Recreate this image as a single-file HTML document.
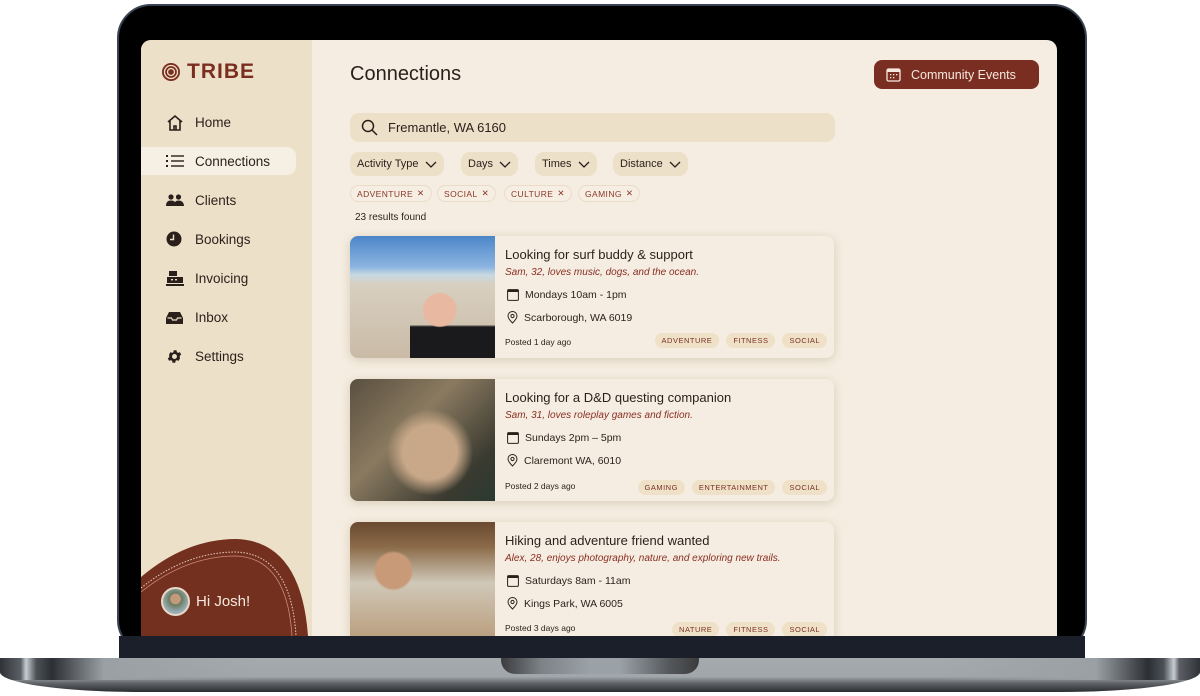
<!DOCTYPE html>
<html style="overflow:hidden"><head><meta charset="utf-8"><style>
*{box-sizing:border-box;margin:0;padding:0}
html,body{width:1200px;height:696px;overflow:hidden}
body{background:#fff;position:relative;font-family:"Liberation Sans",sans-serif;color:#2a1f1a}
.frame{position:absolute;left:117px;top:4px;width:970px;height:650px;background:#000;border-radius:34px;border:2px solid #3a4254}
.screen{position:absolute;left:141px;top:40px;width:916px;height:596px;background:#f5ede1;border-radius:10px 10px 0 0;overflow:hidden}
.bezel{position:absolute;left:119px;top:636px;width:966px;height:23px;background:#1b1f2a}
.base{position:absolute;left:0;top:658px;width:1200px;height:34px;border-radius:0 0 140px 140px/0 0 20px 20px;background:linear-gradient(180deg,#a4aaae 0,#a0a6aa 55%,#5e6266 75%,#2a2c30 100%);overflow:hidden}
.base:before{content:"";position:absolute;left:0;top:0;width:260px;height:22px;background:linear-gradient(90deg,#2f3236 0,#5c6065 8%,#c6cdd3 10%,#4c5055 14%,#2c2f33 20%,#9aa0a4 40%,transparent 100%)}
.base:after{content:"";position:absolute;right:0;top:0;width:260px;height:22px;background:linear-gradient(270deg,#2f3236 0,#5c6065 8%,#c6cdd3 10%,#4c5055 14%,#2c2f33 20%,#9aa0a4 40%,transparent 100%)}
.notch{position:absolute;left:501px;top:658px;width:198px;height:16px;border-radius:0 0 14px 14px;background:linear-gradient(90deg,#3a3b3d,#7c8186 20%,#9aa2a8 45%,#9aa2a8 60%,#55585b 85%,#3a3b3d);z-index:2}
.side{position:absolute;left:0;top:0;width:171px;height:596px;background:#ede0c9;overflow:hidden}
.logo{position:absolute;left:20px;top:20px;display:flex;align-items:center;gap:6px;color:#7a2e1f;font-weight:bold;font-size:21px;letter-spacing:1px}
.nav{position:absolute;left:0;width:155px;height:28px;display:flex;align-items:center;font-size:13.5px;color:#2a1f1a}
.nav svg{position:absolute;left:25px}
.nav span{position:absolute;left:54px}
.nav.act{background:#f6efe3;border-radius:0 9px 9px 0}
.hi{position:absolute;left:20px;top:547px;display:flex;align-items:center;gap:6px;color:#f5e9df;font-size:15px}
.av{width:29px;height:29px;border-radius:50%;border:2px solid #e8d8c8;background:radial-gradient(circle at 50% 40%,#c49a7c 0 25%,#6a7a5e 30%,#9ab0b8 70%)}
h1{position:absolute;left:209px;top:23px;font-size:20px;font-weight:normal;color:#2a1f1a}
.ce{position:absolute;left:733px;top:20px;width:165px;height:29px;background:#7a2e22;border-radius:8px;color:#f5e9df;font-size:12.5px;display:flex;align-items:center;padding-left:12px;gap:10px}
.search{position:absolute;left:209px;top:73px;width:485px;height:29px;background:#ede0c9;border-radius:9px;display:flex;align-items:center;padding-left:11px;gap:10px;font-size:13px}
.dd{position:absolute;top:112px;height:24px;background:#ede0c9;border-radius:9px;font-size:11px;display:flex;align-items:center;padding:0 7px;gap:6px}
.tag{position:absolute;top:145px;height:17px;border:1px solid #eadcc8;border-radius:9px;font-size:8.5px;color:#8a3828;letter-spacing:.4px;display:flex;align-items:center;padding:0 6px;gap:4px;background:#f6eee3}
.res{position:absolute;left:214px;top:172px;font-size:10px}
.card{position:absolute;left:209px;width:484px;height:122px;background:#f5ede1;border-radius:8px;box-shadow:0 2px 10px rgba(120,90,50,.22);overflow:hidden}
.img{position:absolute;left:0;top:0;width:145px;height:100%}
.ct{position:absolute;left:155px;top:11px;font-size:13px}
.cs{position:absolute;left:155px;top:31px;font-size:10px;font-style:italic;color:#8a2e22}
.r{position:absolute;left:157px;font-size:10.5px;display:flex;align-items:center;gap:6px}
.po{position:absolute;left:155px;top:101px;font-size:8.5px}
.pills{position:absolute;right:7px;top:97px;display:flex;gap:7px}
.pill{height:15px;background:#efe0c8;border-radius:8px;font-size:7.5px;letter-spacing:.5px;color:#7a3225;display:flex;align-items:center;padding:0 7px}
</style></head><body>
<div class="frame"></div>
<div class="bezel"></div>
<div class="base"></div>
<div class="notch"></div>
<div class="screen">
 <div class="side">
  <div class="logo"><svg width="20" height="20" viewBox="0 0 20 20"><circle cx="10" cy="10" r="9" fill="#7a2e1f"/><circle cx="10" cy="10" r="6.5" fill="none" stroke="#ede0c9" stroke-width="1.3"/><circle cx="10" cy="10" r="3.5" fill="none" stroke="#ede0c9" stroke-width="1.3"/></svg>TRIBE</div>
  <div class="nav" style="top:68px"><svg width="18" height="17" viewBox="0 0 18 17"><path d="M2 8L9 2l7 6M4 7v9h10V7M8 16v-4h2v4" fill="none" stroke="#2a1f1a" stroke-width="1.6"/></svg><span>Home</span></div>
  <div class="nav act" style="top:107px"><svg width="18" height="14" viewBox="0 0 18 14"><g fill="#2a1f1a"><rect x="0" y="1" width="2" height="2"/><rect x="0" y="6" width="2" height="2"/><rect x="0" y="11" width="2" height="2"/><rect x="5" y="1.3" width="13" height="1.4"/><rect x="5" y="6.3" width="13" height="1.4"/><rect x="5" y="11.3" width="13" height="1.4"/></g></svg><span>Connections</span></div>
  <div class="nav" style="top:146px"><svg width="18" height="14" viewBox="0 0 18 14"><g fill="#2a1f1a"><circle cx="5" cy="4" r="2.6"/><circle cx="12.5" cy="4" r="2.6"/><path d="M0 13c0-4 2-5.5 5-5.5s5 1.5 5 5.5zM8 13c0-4 2-5.5 4.5-5.5s5.5 1.5 5.5 5.5z"/></g></svg><span>Clients</span></div>
  <div class="nav" style="top:185px"><svg width="16" height="16" viewBox="0 0 16 16"><circle cx="8" cy="8" r="7.5" fill="#2a1f1a"/><path d="M7.5 3.5V8.5H4" stroke="#ede0c9" stroke-width="1.4" fill="none"/></svg><span>Bookings</span></div>
  <div class="nav" style="top:224px"><svg width="18" height="16" viewBox="0 0 18 16"><g fill="#2a1f1a"><rect x="3" y="1" width="8" height="5"/><rect x="1" y="7" width="16" height="6"/><rect x="0" y="14" width="18" height="2"/></g><rect x="5" y="9" width="2" height="1.4" fill="#ede0c9"/><rect x="9" y="9" width="2" height="1.4" fill="#ede0c9"/></svg><span>Invoicing</span></div>
  <div class="nav" style="top:263px"><svg width="17" height="13" viewBox="0 0 17 13"><path d="M3 1h11l3 6v6H0V7z" fill="#2a1f1a"/><path d="M1.5 7h4l1 2h4l1-2h4" stroke="#ede0c9" stroke-width="1.2" fill="none"/></svg><span>Inbox</span></div>
  <div class="nav" style="top:302px"><svg width="17" height="17" viewBox="0 0 24 24"><path fill="#2a1f1a" d="M19.4 13a7.5 7.5 0 000-2l2.1-1.6-2-3.5-2.5 1a7.6 7.6 0 00-1.7-1l-.4-2.7h-4l-.4 2.7a7.6 7.6 0 00-1.7 1l-2.5-1-2 3.5L4.6 11a7.5 7.5 0 000 2l-2.1 1.6 2 3.5 2.5-1a7.6 7.6 0 001.7 1l.4 2.7h4l.4-2.7a7.6 7.6 0 001.7-1l2.5 1 2-3.5zM12 15.5a3.5 3.5 0 110-7 3.5 3.5 0 010 7z"/></svg><span>Settings</span></div>
  <svg style="position:absolute;left:0;top:497px" width="171" height="99" viewBox="0 0 171 99">
   <path d="M0 40 Q45 2 95 2 Q160 4 167 99 L0 99Z" fill="#74301f"/>
   <path d="M0 51 Q45 15 95 15 Q150 17 155 99" fill="none" stroke="#e8cfc3" stroke-width="1" stroke-dasharray="1.5 1.5"/>
   <path d="M0 55 Q45 19 95 19 Q146 21 151 99" fill="none" stroke="#c98a7c" stroke-width=".8"/>
  </svg>
  <div class="hi"><div class="av"></div>Hi Josh!</div>
 </div>
 <h1>Connections</h1>
 <div class="ce"><svg width="15" height="14" viewBox="0 0 15 14"><rect x="1" y="1" width="13" height="12" rx="1.5" fill="none" stroke="#f5e9df" stroke-width="1.3"/><rect x="1" y="1" width="13" height="3" fill="#f5e9df"/><g fill="#f5e9df"><rect x="4" y="6" width="1.3" height="1.3"/><rect x="7" y="6" width="1.3" height="1.3"/><rect x="10" y="6" width="1.3" height="1.3"/><rect x="4" y="9" width="1.3" height="1.3"/><rect x="7" y="9" width="1.3" height="1.3"/></g></svg>Community Events</div>
 <div class="search"><svg width="17" height="17" viewBox="0 0 17 17"><circle cx="7" cy="7" r="5.5" fill="none" stroke="#2a1f1a" stroke-width="1.5"/><path d="M11 11l5 5" stroke="#2a1f1a" stroke-width="1.5"/></svg>Fremantle, WA 6160</div>
 <div class="dd" style="left:209px">Activity Type <svg width="12" height="7" viewBox="0 0 12 7"><path d="M1 1l5 5 5-5" fill="none" stroke="#2a1f1a" stroke-width="1.3"/></svg></div>
 <div class="dd" style="left:320px">Days <svg width="12" height="7" viewBox="0 0 12 7"><path d="M1 1l5 5 5-5" fill="none" stroke="#2a1f1a" stroke-width="1.3"/></svg></div>
 <div class="dd" style="left:394px">Times <svg width="12" height="7" viewBox="0 0 12 7"><path d="M1 1l5 5 5-5" fill="none" stroke="#2a1f1a" stroke-width="1.3"/></svg></div>
 <div class="dd" style="left:472px">Distance <svg width="12" height="7" viewBox="0 0 12 7"><path d="M1 1l5 5 5-5" fill="none" stroke="#2a1f1a" stroke-width="1.3"/></svg></div>
 <div class="tag" style="left:209px">ADVENTURE <span>✕</span></div>
 <div class="tag" style="left:296px">SOCIAL <span>✕</span></div>
 <div class="tag" style="left:363px">CULTURE <span>✕</span></div>
 <div class="tag" style="left:437px">GAMING <span>✕</span></div>
 <div class="res">23 results found</div>

 <div class="card" style="top:196px">
  <div class="img" style="background:linear-gradient(180deg,#4c86c8 0,#8ab4e0 25%,#c8d8e0 32%,#d8cfc0 40%,#c9bba6 100%)"><div style="position:absolute;left:60px;top:48px;width:85px;height:74px;background:radial-gradient(circle at 35% 35%,#e8b8a0 0 22%,transparent 24%),linear-gradient(180deg,transparent 55%,#1a1a1c 58%)"></div></div>
  <div class="ct">Looking for surf buddy &amp; support</div>
  <div class="cs">Sam, 32, loves music, dogs, and the ocean.</div>
  <div class="r" style="top:53px"><svg width="12" height="12" viewBox="0 0 12 12"><rect x=".6" y=".6" width="10.8" height="10.8" rx="1" fill="none" stroke="#2a1f1a"/><rect x=".6" y=".6" width="10.8" height="2.4" fill="#2a1f1a"/></svg>Mondays 10am - 1pm</div>
  <div class="r" style="top:75px"><svg width="11" height="13" viewBox="0 0 11 13"><path d="M5.5 12S1 7.5 1 5a4.5 4.5 0 019 0c0 2.5-4.5 7-4.5 7z" fill="none" stroke="#2a1f1a"/><circle cx="5.5" cy="5" r="1.6" fill="none" stroke="#2a1f1a"/></svg>Scarborough, WA 6019</div>
  <div class="po">Posted 1 day ago</div>
  <div class="pills"><div class="pill">ADVENTURE</div><div class="pill">FITNESS</div><div class="pill">SOCIAL</div></div>
 </div>

 <div class="card" style="top:339px">
  <div class="img" style="background:radial-gradient(circle at 55% 60%,#c8a888 0 25%,transparent 40%),linear-gradient(135deg,#5a5040,#8a7a60 40%,#3a3a30 80%,#2a3a30)"></div>
  <div class="ct">Looking for a D&amp;D questing companion</div>
  <div class="cs">Sam, 31, loves roleplay games and fiction.</div>
  <div class="r" style="top:53px"><svg width="12" height="12" viewBox="0 0 12 12"><rect x=".6" y=".6" width="10.8" height="10.8" rx="1" fill="none" stroke="#2a1f1a"/><rect x=".6" y=".6" width="10.8" height="2.4" fill="#2a1f1a"/></svg>Sundays 2pm – 5pm</div>
  <div class="r" style="top:75px"><svg width="11" height="13" viewBox="0 0 11 13"><path d="M5.5 12S1 7.5 1 5a4.5 4.5 0 019 0c0 2.5-4.5 7-4.5 7z" fill="none" stroke="#2a1f1a"/><circle cx="5.5" cy="5" r="1.6" fill="none" stroke="#2a1f1a"/></svg>Claremont WA, 6010</div>
  <div class="po" style="top:102px">Posted 2 days ago</div>
  <div class="pills" style="top:101px"><div class="pill">GAMING</div><div class="pill">ENTERTAINMENT</div><div class="pill">SOCIAL</div></div>
 </div>

 <div class="card" style="top:482px">
  <div class="img" style="background:radial-gradient(circle at 30% 40%,#c89a78 0 14%,transparent 16%),linear-gradient(180deg,#6a4a30 0,#8a6a48 20%,#d0c8b8 50%,#b89a78 100%)"></div>
  <div class="ct">Hiking and adventure friend wanted</div>
  <div class="cs">Alex, 28, enjoys photography, nature, and exploring new trails.</div>
  <div class="r" style="top:53px"><svg width="12" height="12" viewBox="0 0 12 12"><rect x=".6" y=".6" width="10.8" height="10.8" rx="1" fill="none" stroke="#2a1f1a"/><rect x=".6" y=".6" width="10.8" height="2.4" fill="#2a1f1a"/></svg>Saturdays 8am - 11am</div>
  <div class="r" style="top:75px"><svg width="11" height="13" viewBox="0 0 11 13"><path d="M5.5 12S1 7.5 1 5a4.5 4.5 0 019 0c0 2.5-4.5 7-4.5 7z" fill="none" stroke="#2a1f1a"/><circle cx="5.5" cy="5" r="1.6" fill="none" stroke="#2a1f1a"/></svg>Kings Park, WA 6005</div>
  <div class="po">Posted 3 days ago</div>
  <div class="pills" style="top:100px"><div class="pill">NATURE</div><div class="pill">FITNESS</div><div class="pill">SOCIAL</div></div>
 </div>
</div>
</body></html>
